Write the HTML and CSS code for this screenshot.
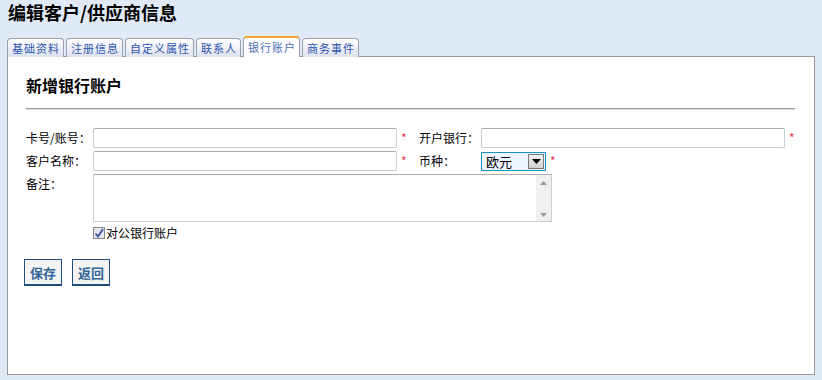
FILE: index.html
```html
<!DOCTYPE html>
<html lang="zh-CN">
<head>
    <meta charset="UTF-8">
    <title>编辑客户/供应商信息</title>
    <link rel="stylesheet" href="styles.css">
</head>
<body>
    <h1 class="page-title">编辑客户/供应商信息</h1>

    <!-- 选项卡 -->
    <ul class="tabs">
        <li class="tab">基础资料</li>
        <li class="tab">注册信息</li>
        <li class="tab">自定义属性</li>
        <li class="tab">联系人</li>
        <li class="tab active">银行账户</li>
        <li class="tab">商务事件</li>
    </ul>

    <div class="panel">
        <h2 class="panel-title">新增银行账户</h2>
        <hr class="rule">

        <div class="form-row">
            <label class="lbl">卡号/账号：</label>
            <input type="text" class="field">
            <span class="req">*</span>
            <label class="lbl lbl2">开户银行：</label>
            <input type="text" class="field">
            <span class="req">*</span>
        </div>

        <div class="form-row">
            <label class="lbl">客户名称：</label>
            <input type="text" class="field">
            <span class="req">*</span>
            <label class="lbl lbl2">币种：</label>
            <div class="select">
                <span class="select-text">欧元</span>
                <span class="select-btn">
                    <svg width="9" height="5" viewBox="0 0 9 5"><path d="M0 0h9L4.5 5z" fill="#000"/></svg>
                </span>
            </div>
            <span class="req">*</span>
        </div>

        <div class="form-row memo-row">
            <label class="lbl">备注：</label>
            <div class="memo">
                <textarea class="memo-text"></textarea>
                <div class="scrollbar">
                    <svg width="7" height="4" viewBox="0 0 7 4"><path d="M3.5 0L7 4H0z" fill="#9a9a9a"/></svg>
                    <svg width="7" height="4" viewBox="0 0 7 4"><path d="M0 0h7L3.5 4z" fill="#9a9a9a"/></svg>
                </div>
            </div>
        </div>

        <div class="check-row">
            <span class="checkbox">
                <svg width="10" height="10" viewBox="0 0 10 10"><path d="M1.5 5.5L4 8.5L9 1" fill="none" stroke="#3a4fa0" stroke-width="1.8"/></svg>
            </span>
            <span>对公银行账户</span>
        </div>

        <div class="actions">
            <button class="btn">保存</button>
            <button class="btn">返回</button>
        </div>
    </div>
</body>
</html>
```

FILE: styles.css
```css
body { margin: 0; padding: 0 7px 0 7px; background: #dfeaf6; font-family: "Noto Sans CJK SC", "Liberation Sans", sans-serif; font-size: 12px; color: #000; height: 380px; box-sizing: border-box; }
.page-title { margin: 0; padding: 0 0 0 1px; font-size: 18px; font-weight: bold; line-height: 24px; height: 37px; }

.tabs { list-style: none; margin: 0; padding: 0; display: flex; align-items: flex-end; gap: 2px; height: 20px; }
.tab { height: 18px; line-height: 18px; padding: 0 3px 0 4px; border: 1px solid #9aa0ad; border-bottom: none; border-radius: 4px 4px 0 0; background: linear-gradient(#ffffff, #dde1ee); color: #2a55b0; font-size: 11px; letter-spacing: 1px; }
.tab.active { background: #fff; border-top: 2px solid #f0a830; height: 19px; color: #4a6fb8; position: relative; z-index: 1; }

.panel { height: 319px; border: 1px solid #999; background: #fff; padding: 0 19px 0 18px; box-sizing: border-box; margin-top: -1px; }
.panel-title { margin: 0; padding-top: 17px; font-size: 16px; font-weight: bold; line-height: 22px; height: 40px; box-sizing: border-box; }
.rule { margin: 11px 0 0 0; border: none; border-top: 1px solid #999; border-bottom: 1px solid #e4e4e4; height: 0; }

.form-row { display: flex; align-items: center; height: 20px; margin-bottom: 3px; }
.rule + .form-row { margin-top: 18px; }
.lbl { width: 67px; flex: none; line-height: 20px; }
.lbl2 { width: 62px; }
.field { flex: none; width: 304px; height: 20px; box-sizing: border-box; border: 1px solid #c8ccd4; border-top-color: #a8acb4; border-radius: 2px; margin: 0; padding: 0 2px; font: inherit; }
.req { width: 22px; flex: none; color: #e8324a; padding-left: 4px; box-sizing: border-box; font-size: 12px; line-height: 20px; }

.select { flex: none; display: flex; width: 65px; height: 19px; box-sizing: border-box; border: 1px solid #1a90c8; background: #eef5ff; font-size: 13px; }
.select-text { flex: 1; padding-left: 4px; line-height: 17px; }
.select-btn { width: 16px; margin: 1px; display: flex; align-items: center; justify-content: center; background: linear-gradient(#f4f4f4, #cfcfcf); border: 1px solid #777; box-sizing: border-box; }

.memo-row { height: auto; align-items: flex-start; }
.memo { flex: none; display: flex; width: 459px; height: 48px; box-sizing: border-box; border: 1px solid #c8ccd4; border-top-color: #a8acb4; }
.memo-text { flex: 1; border: none; margin: 0; padding: 0; resize: none; outline: none; font: inherit; }
.scrollbar { width: 15px; background: #f0f0f0; display: flex; flex-direction: column; justify-content: space-between; align-items: center; padding: 6px 0 4px 0; box-sizing: border-box; }

.check-row { display: flex; align-items: center; margin-left: 67px; margin-top: 2px; height: 16px; line-height: 16px; }
.checkbox { width: 12px; height: 12px; box-sizing: border-box; border: 1px solid #8a8a8a; background: #e4e6ee; display: flex; align-items: center; justify-content: center; margin-right: 1px; }

.actions { display: flex; gap: 10px; margin-top: 18px; margin-left: -2px; }
.btn { height: 27px; padding: 0 5px; border: 1px solid #1d4e7e; border-width: 1px 1px 2px 1px; background: #f4f4f4; color: #336699; font: inherit; font-weight: bold; font-size: 13px; cursor: pointer; }
```
